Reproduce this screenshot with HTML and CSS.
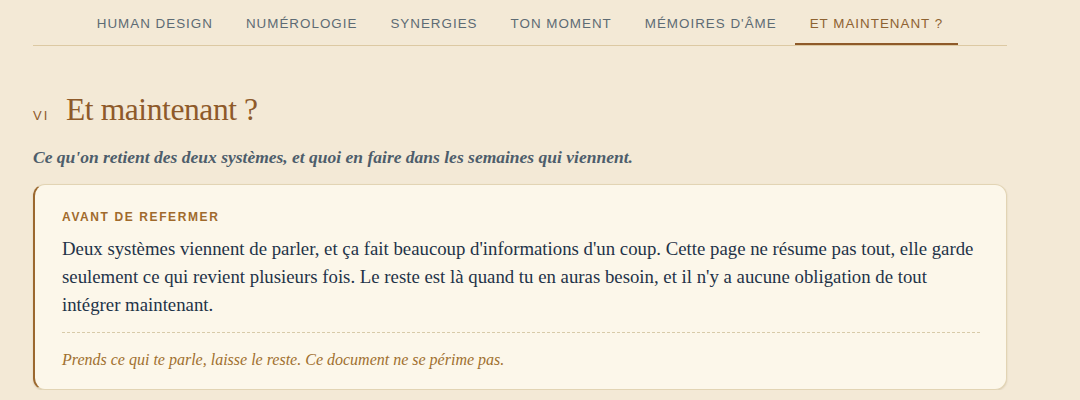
FILE: index.html
```html
<!DOCTYPE html>
<html lang="fr">
<head>
<meta charset="utf-8">
<link rel="stylesheet" href="styles.css">
</head>
<body>
<div class="page">
  <nav class="tabs">
    <a class="tab">HUMAN DESIGN</a>
    <a class="tab">NUMÉROLOGIE</a>
    <a class="tab">SYNERGIES</a>
    <a class="tab">TON MOMENT</a>
    <a class="tab">MÉMOIRES D'ÂME</a>
    <a class="tab active">ET MAINTENANT ?</a>
  </nav>
  <section class="section">
    <h1 class="title"><span class="num">VI</span><span class="title-text">Et maintenant ?</span></h1>
    <p class="lead">Ce qu'on retient des deux systèmes, et quoi en faire dans les semaines qui viennent.</p>
    <div class="card">
      <div class="label">AVANT DE REFERMER</div>
      <p class="body">Deux systèmes viennent de parler, et ça fait beaucoup d'informations d'un coup. Cette page ne résume pas tout, elle garde seulement ce qui revient plusieurs fois. Le reste est là quand tu en auras besoin, et il n'y a aucune obligation de tout intégrer maintenant.</p>
      <p class="note">Prends ce qui te parle, laisse le reste. Ce document ne se périme pas.</p>
    </div>
  </section>
</div>
</body>
</html>
```

FILE: styles.css
```css
html, body {
  margin: 0;
  padding: 0;
}
body {
  background: #f3e9d6;
  font-family: "Liberation Serif", serif;
}
.page {
  width: 974px;
  margin-left: 33px;
}
.tabs {
  display: flex;
  justify-content: center;
  gap: 3px;
  border-bottom: 1px solid #dcc9a3;
}
.tab {
  font-family: "Liberation Sans", Arial, sans-serif;
  font-size: 13.4px;
  letter-spacing: 1px;
  line-height: 16px;
  color: #5d6b74;
  padding: 16px 15px 11px;
  border-bottom: 2px solid transparent;
}
.tab.active {
  color: #8e6231;
  border-bottom-color: #8e5a2a;
}
.section {
  padding-top: 44px;
}
.title {
  margin: 0;
  display: flex;
  align-items: baseline;
  font-weight: normal;
}
.num {
  font-family: "Liberation Sans", Arial, sans-serif;
  font-size: 13px;
  letter-spacing: 2px;
  color: #8e5a2a;
  width: 33px;
}
.title-text {
  font-family: "Liberation Serif", serif;
  font-size: 31.5px;
  line-height: 40px;
  color: #8e5a2a;
  letter-spacing: -0.4px;
}
.lead {
  margin: 17px 0 0;
  font-style: italic;
  font-weight: bold;
  font-size: 17.5px;
  color: #4d5d6b;
}
.card {
  margin-top: 16px;
  background: #fcf7ea;
  border: 1px solid #e2d4b4;
  border-left: 2px solid #9b682f;
  border-radius: 12px;
  padding: 24px 26px 17px 27px;
  box-shadow: 0 1px 2px rgba(120, 95, 50, 0.2);
}
.label {
  font-family: "Liberation Sans", Arial, sans-serif;
  font-size: 12px;
  font-weight: bold;
  letter-spacing: 1.6px;
  color: #a06a2c;
  line-height: 16px;
}
.body {
  margin: 10px 0 0;
  font-size: 18.8px;
  line-height: 28px;
  color: #1f3348;
  padding-bottom: 13px;
  border-bottom: 1px dashed #d8cba9;
}
.note {
  margin: 15px 0 0;
  font-style: italic;
  font-size: 16px;
  line-height: 24px;
  color: #a0702f;
}
```
